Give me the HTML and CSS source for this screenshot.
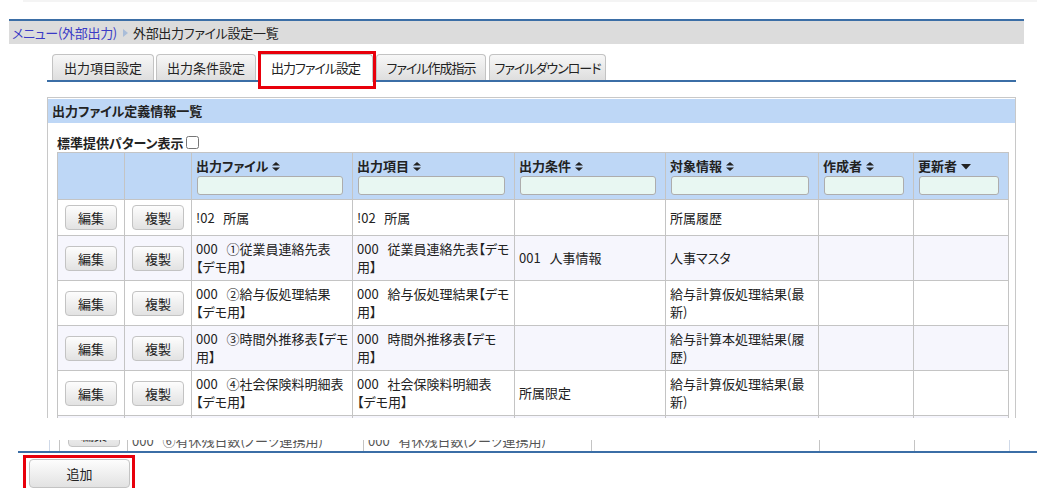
FILE: index.html
```html
<!DOCTYPE html>
<html lang="ja">
<head>
    <meta charset="UTF-8">
    <meta name="viewport" content="width=device-width, initial-scale=1.0">
    <title>外部出力ファイル設定一覧</title>
    <link rel="stylesheet" href="styles.css">
</head>
<body>
    <div class="topline"></div>
    <div class="crumbs">
        <a href="#">メニュー(外部出力)</a>
        <span class="crumb-arrow"></span>
        <span>外部出力ファイル設定一覧</span>
    </div>

    <ul class="tabs">
        <li class="tab w102">出力項目設定</li>
        <li class="tab w100">出力条件設定</li>
        <li class="tab w115 tight active">出力ファイル設定</li>
        <li class="tab w110 tight">ファイル作成指示</li>
        <li class="tab w117 tight">ファイルダウンロード</li>
    </ul>

    <div class="panel">
        <div class="panel-title">出力ファイル定義情報一覧</div>
        <label class="std-toggle">標準提供パターン表示 <input type="checkbox"></label>
        <table class="list">
            <colgroup>
                <col style="width:67px"><col style="width:67px"><col style="width:161px"><col style="width:162px">
                <col style="width:151px"><col style="width:153px"><col style="width:95px"><col style="width:95px">
            </colgroup>
            <thead>
                <tr>
                    <th></th>
                    <th></th>
                    <th>出力ファイル <svg class="sort" viewBox="0 0 8 9"><path d="M0 3.6L4 0L8 3.6ZM0 5.4L4 9L8 5.4Z"/></svg><input type="text"></th>
                    <th>出力項目 <svg class="sort" viewBox="0 0 8 9"><path d="M0 3.6L4 0L8 3.6ZM0 5.4L4 9L8 5.4Z"/></svg><input type="text"></th>
                    <th>出力条件 <svg class="sort" viewBox="0 0 8 9"><path d="M0 3.6L4 0L8 3.6ZM0 5.4L4 9L8 5.4Z"/></svg><input type="text"></th>
                    <th>対象情報 <svg class="sort" viewBox="0 0 8 9"><path d="M0 3.6L4 0L8 3.6ZM0 5.4L4 9L8 5.4Z"/></svg><input type="text"></th>
                    <th>作成者 <svg class="sort" viewBox="0 0 8 9"><path d="M0 3.6L4 0L8 3.6ZM0 5.4L4 9L8 5.4Z"/></svg><input type="text"></th>
                    <th>更新者 <svg class="sort down" viewBox="0 0 10 9"><path d="M0 2L10 2L5 7.5Z"/></svg><input type="text"></th>
                </tr>
            </thead>
            <tbody>
                <tr>
                    <td class="act"><button class="btn">編集</button></td>
                    <td class="act"><button class="btn">複製</button></td>
                    <td>!02&nbsp;&nbsp;&nbsp;所属</td>
                    <td>!02&nbsp;&nbsp;&nbsp;所属</td>
                    <td></td>
                    <td>所属履歴</td>
                    <td></td>
                    <td></td>
                </tr>
                <tr>
                    <td class="act"><button class="btn">編集</button></td>
                    <td class="act"><button class="btn">複製</button></td>
                    <td>000&nbsp;&nbsp;&nbsp;①従業員連絡先表<br>【デモ用】</td>
                    <td>000&nbsp;&nbsp;&nbsp;従業員連絡先表【デモ<br>用】</td>
                    <td>001&nbsp;&nbsp;&nbsp;人事情報</td>
                    <td>人事マスタ</td>
                    <td></td>
                    <td></td>
                </tr>
                <tr>
                    <td class="act"><button class="btn">編集</button></td>
                    <td class="act"><button class="btn">複製</button></td>
                    <td>000&nbsp;&nbsp;&nbsp;②給与仮処理結果<br>【デモ用】</td>
                    <td>000&nbsp;&nbsp;&nbsp;給与仮処理結果【デモ<br>用】</td>
                    <td></td>
                    <td>給与計算仮処理結果(最<br>新)</td>
                    <td></td>
                    <td></td>
                </tr>
                <tr>
                    <td class="act"><button class="btn">編集</button></td>
                    <td class="act"><button class="btn">複製</button></td>
                    <td>000&nbsp;&nbsp;&nbsp;③時間外推移表【デモ<br>用】</td>
                    <td>000&nbsp;&nbsp;&nbsp;時間外推移表【デモ<br>用】</td>
                    <td></td>
                    <td>給与計算本処理結果(履<br>歴)</td>
                    <td></td>
                    <td></td>
                </tr>
                <tr>
                    <td class="act"><button class="btn">編集</button></td>
                    <td class="act"><button class="btn">複製</button></td>
                    <td>000&nbsp;&nbsp;&nbsp;④社会保険料明細表<br>【デモ用】</td>
                    <td>000&nbsp;&nbsp;&nbsp;社会保険料明細表<br>【デモ用】</td>
                    <td>所属限定</td>
                    <td>給与計算仮処理結果(最<br>新)</td>
                    <td></td>
                    <td></td>
                </tr>
                <tr>
                    <td class="act"><button class="btn">編集</button></td>
                    <td class="act"><button class="btn">複製</button></td>
                    <td>000&nbsp;&nbsp;&nbsp;⑤有給休暇取得状況<br>【デモ用】</td>
                    <td>000&nbsp;&nbsp;&nbsp;有給休暇取得状況<br>【デモ用】</td>
                    <td></td>
                    <td>勤怠実績</td>
                    <td></td>
                    <td></td>
                </tr>
            </tbody>
        </table>
    </div>

    <!-- top edge of the next list, cut off under the footer -->
    <div class="peek">
        <div class="peek-cell edge"></div>
        <div class="peek-cell"><span class="btn peek-btn">編集</span></div>
        <div class="peek-cell"><span class="peek-text">000&nbsp;&nbsp;&nbsp;⑥有休残日数(ノーツ連携用)</span></div>
        <div class="peek-cell"><span class="peek-text">000&nbsp;&nbsp;&nbsp;有休残日数(ノーツ連携用)</span></div>
        <div class="peek-cell"></div>
        <div class="peek-cell"></div>
        <div class="peek-cell"></div>
        <div class="peek-cell edge"></div>
    </div>

    <div class="footer">
        <button class="btn add">追加</button>
    </div>
</body>
</html>
```

FILE: styles.css
```css
body {
    margin: 0;
    font-family: "Noto Sans CJK JP", "Noto Sans", sans-serif;
    font-size: 13px;
    color: #222;
    font-feature-settings: "palt";
    background-color: #fff;
}
.topline {
    height: 2px;
    margin-left: 23px;
    background-color: #f4f4f4;
}
.crumbs {
    margin: 17px 13px 0 9px;
    height: 23px;
    line-height: 23px;
    padding-left: 3px;
    border-top: 2px solid #3b6ea6;
    background-color: #dcdcdc;
    display: flex;
    align-items: center;
    letter-spacing: -0.3px;
}
.crumbs a {
    color: #3a3ac6;
    text-decoration: none;
}
.crumb-arrow {
    width: 0;
    height: 0;
    margin: 0 5px 0 6px;
    border-top: 4px solid transparent;
    border-bottom: 4px solid transparent;
    border-left: 5px solid #a9bdd9;
}

/* tabs */
.tabs {
    list-style: none;
    margin: 10px 0 0 47px;
    padding: 0 0 0 5px;
    width: 964px;
    height: 26px;
    display: flex;
    gap: 2px;
    border-bottom: 2px solid #3b6ea6;
}
.tab {
    box-sizing: border-box;
    height: 26px;
    line-height: 25px;
    padding: 0;
    text-align: center;
    white-space: nowrap;
    border: 1px solid #c3c3c3;
    border-bottom: none;
    border-radius: 4px 4px 0 0;
    background: linear-gradient(#f7f7f7, #dedede);
    position: relative;
}
.tab.tight {
    letter-spacing: -1px;
}
.w100 { width: 100px; }
.w102 { width: 102px; }
.w110 { width: 110px; margin-left: 1px; }
.w115 { width: 115px; }
.w117 { width: 117px; margin-left: 1px; }
.tab.active {
    background: #fff;
    height: 28px;
}
.tab.active::after {
    content: "";
    position: absolute;
    top: -4px;
    left: -1px;
    right: -4px;
    bottom: -7px;
    border: 3px solid #e8000b;
}

/* list panel */
.panel {
    margin: 15px 0 0 47px;
    width: 969px;
    height: 321px;
    box-sizing: border-box;
    border: 1px solid #c8c8c8;
    border-bottom: none;
    padding-top: 1px;
    overflow: hidden;
}
.panel-title {
    height: 24px;
    line-height: 24px;
    padding-left: 4px;
    font-weight: bold;
    background-color: #bed7f6;
}
.std-toggle {
    display: flex;
    align-items: center;
    margin: 10px 0 0 9px;
    height: 19px;
    font-weight: bold;
}
.std-toggle input {
    margin: 0 0 0 2px;
    width: 13px;
    height: 13px;
}
.list {
    margin-left: 9px;
    width: 951px;
    table-layout: fixed;
    border-collapse: collapse;
}
.list th, .list td {
    border: 1px solid #c4c4c4;
    padding: 4px;
    line-height: 18px;
    text-align: left;
    white-space: nowrap;
}
.list th {
    background-color: #bed7f6;
    vertical-align: top;
    font-weight: bold;
}
.list th input {
    display: block;
    box-sizing: border-box;
    width: calc(100% - 6px);
    height: 19px;
    margin: 1px 0 0 1px;
    border: 1px solid #adadad;
    border-radius: 3px;
    background-color: #e8f7f2;
}
.sort {
    width: 8px;
    height: 9px;
    fill: #222;
    margin-left: 1px;
}
.sort.down {
    width: 10px;
}
.list tbody tr:nth-child(even) td {
    background-color: #f6f6fd;
}
.list td.act {
    text-align: center;
}
.btn {
    width: 52px;
    height: 25px;
    margin: 1px 0;
    padding: 0;
    border: 1px solid #c3c3c3;
    border-radius: 4px;
    background: linear-gradient(#fdfdfd, #e2e2e2);
    font-family: inherit;
    font-size: 13px;
    color: #222;
    cursor: pointer;
}

/* cut-off row under the footer */
.peek {
    margin: 22px 0 0 49px;
    height: 11px;
    display: grid;
    grid-template-columns: 10px 68px 236px 228px 228px 95px 95px 9px;
    overflow: hidden;
}
.peek-cell {
    border-left: 1px solid #c4c4c4;
    overflow: hidden;
    white-space: nowrap;
}
.peek-cell.edge {
    border-left-color: #cfd9e8;
}
.peek-btn {
    display: block;
    box-sizing: border-box;
    margin: -18px 0 0 8px;
    line-height: 23px;
    text-align: center;
}
.peek-text {
    display: block;
    margin: -8px 0 0 4px;
    line-height: 18px;
    color: #555;
}

.footer {
    margin-left: 18px;
    border-top: 2px solid #3b6ea6;
    padding: 6px 0 0 11px;
}
.btn.add {
    width: 101px;
    height: 29px;
    margin: 0;
    position: relative;
}
.btn.add::after {
    content: "";
    position: absolute;
    top: -5px;
    left: -7px;
    right: -6px;
    bottom: -7px;
    border: 3px solid #e8000b;
}
```
